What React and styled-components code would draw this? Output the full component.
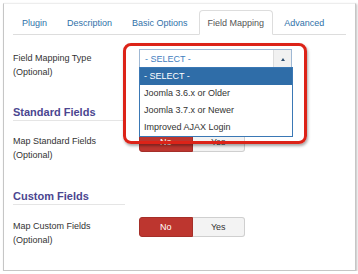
import styled, { createGlobalStyle } from 'styled-components';

const GlobalStyle = createGlobalStyle`
  html, body {
    margin: 0;
    padding: 0;
    background: #fff;
  }
  body {
    font-family: "Liberation Sans", Arial, sans-serif;
    font-size: 9px;
    color: #333;
  }
`;

const tabs = ['Plugin', 'Description', 'Basic Options', 'Field Mapping', 'Advanced'];
const options = ['- SELECT -', 'Joomla 3.6.x or Older', 'Joomla 3.7.x or Newer', 'Improved AJAX Login'];

const App = () => {
  return (
    <>
      <GlobalStyle />
      <Card>
        <TabNav>
          {tabs.map((tab) => (
            <Tab key={tab} $active={tab === 'Field Mapping'}>{tab}</Tab>
          ))}
        </TabNav>

        <Form>
          <FieldRow>
            <Label>Field Mapping Type<br />(Optional)</Label>
            <SelectWrap>
              <Select>
                <SelectText>- SELECT -</SelectText>
                <ArrowBox><Caret /></ArrowBox>
              </Select>
              <OptionList>
                {options.map((opt, index) => (
                  <Option key={opt} $selected={index === 0}>{opt}</Option>
                ))}
              </OptionList>
            </SelectWrap>
          </FieldRow>

          <Heading>Standard Fields</Heading>
          <FieldRow $gap={11}>
            <Label>Map Standard Fields<br />(Optional)</Label>
            <Toggle>
              <ToggleButton $on>No</ToggleButton>
              <ToggleButton>Yes</ToggleButton>
            </Toggle>
          </FieldRow>

          <Heading $top={27}>Custom Fields</Heading>
          <FieldRow $gap={12}>
            <Label>Map Custom Fields<br />(Optional)</Label>
            <Toggle>
              <ToggleButton $on>No</ToggleButton>
              <ToggleButton>Yes</ToggleButton>
            </Toggle>
          </FieldRow>
        </Form>

        <Highlight />
      </Card>
    </>
  );
};

export default App;

const Card = styled.div`
  position: relative;
  box-sizing: border-box;
  margin: 3px 0 0 3px;
  width: 353px;
  height: 268px;
  padding: 6px 9px 0 9px;
  background: #fff;
  border: 1px solid #c6c6c6;
  border-top-color: #ededed;
  box-shadow: 1px 1px 2px rgba(0, 0, 0, 0.25);
`;

const TabNav = styled.div`
  display: flex;
  gap: 2px;
  border-bottom: 1px solid #ddd;
  height: 24px;
`;

const Tab = styled.div`
  box-sizing: border-box;
  height: 25px;
  display: flex;
  align-items: center;
  padding: 0 8px;
  margin-bottom: -1px;
  border: 1px solid ${(p) => (p.$active ? '#ddd' : 'transparent')};
  border-bottom-color: ${(p) => (p.$active ? '#fff' : 'transparent')};
  border-radius: 4px 4px 0 0;
  background: ${(p) => (p.$active ? '#fff' : 'transparent')};
  color: ${(p) => (p.$active ? '#555' : '#3071a9')};
  font-size: 9px;
`;

const Form = styled.div`
  padding-top: 14px;
`;

const FieldRow = styled.div`
  display: grid;
  grid-template-columns: 126px 1fr;
  align-items: start;
  margin-top: ${(p) => p.$gap || 0}px;
`;

const Label = styled.div`
  padding-top: 2px;
  line-height: 14px;
  font-size: 9px;
  color: #333;
`;

const Heading = styled.div`
  width: 112px;
  margin-top: ${(p) => p.$top || 26}px;
  line-height: 15px;
  font-size: 11px;
  font-weight: bold;
  color: #4b4690;
  border-bottom: 1px solid #e5e5e5;
`;

const SelectWrap = styled.div`
  position: relative;
  width: 153px;
`;

const Select = styled.div`
  box-sizing: border-box;
  display: flex;
  height: 19px;
  border: 1px solid #9fb8d4;
  border-bottom: none;
  background: #fff;
`;

const SelectText = styled.div`
  flex: 1;
  padding-left: 5px;
  line-height: 18px;
  color: #3f80c0;
  font-size: 9px;
`;

const ArrowBox = styled.div`
  width: 17px;
  display: flex;
  align-items: center;
  justify-content: center;
  background: #f1f1f1;
  border-left: 1px solid #ddd;
`;

const Caret = styled.span`
  width: 0;
  height: 0;
  border-left: 2.5px solid transparent;
  border-right: 2.5px solid transparent;
  border-bottom: 3px solid #2f4f6f;
`;

const OptionList = styled.div`
  position: absolute;
  top: 18px;
  left: 0;
  right: -1px;
  box-sizing: border-box;
  background: #fff;
  border: 1px solid #3a78b5;
  z-index: 2;
`;

const Option = styled.div`
  height: 17px;
  line-height: 17px;
  padding-left: 4px;
  font-size: 9px;
  background: ${(p) => (p.$selected ? '#2f6da8' : '#fff')};
  color: ${(p) => (p.$selected ? '#fff' : '#333')};
`;

const Toggle = styled.div`
  display: flex;
  width: 106px;
  height: 20px;
`;

const ToggleButton = styled.div`
  flex: 1;
  box-sizing: border-box;
  display: flex;
  align-items: center;
  justify-content: center;
  font-size: 9px;
  background: ${(p) => (p.$on ? '#bd362f' : '#f3f3f3')};
  color: ${(p) => (p.$on ? '#fff' : '#333')};
  border: 1px solid ${(p) => (p.$on ? '#a52f29' : '#cfcfcf')};
  border-radius: ${(p) => (p.$on ? '3px 0 0 3px' : '0 3px 3px 0')};
  ${(p) => !p.$on && 'border-left: none;'}
`;

const Highlight = styled.div`
  position: absolute;
  left: 119px;
  top: 39px;
  width: 184px;
  height: 101px;
  box-sizing: border-box;
  border: 3px solid #dc2318;
  border-radius: 8px;
  box-shadow: 1px 2px 3px rgba(0, 0, 0, 0.35);
  z-index: 3;
  pointer-events: none;
`;
